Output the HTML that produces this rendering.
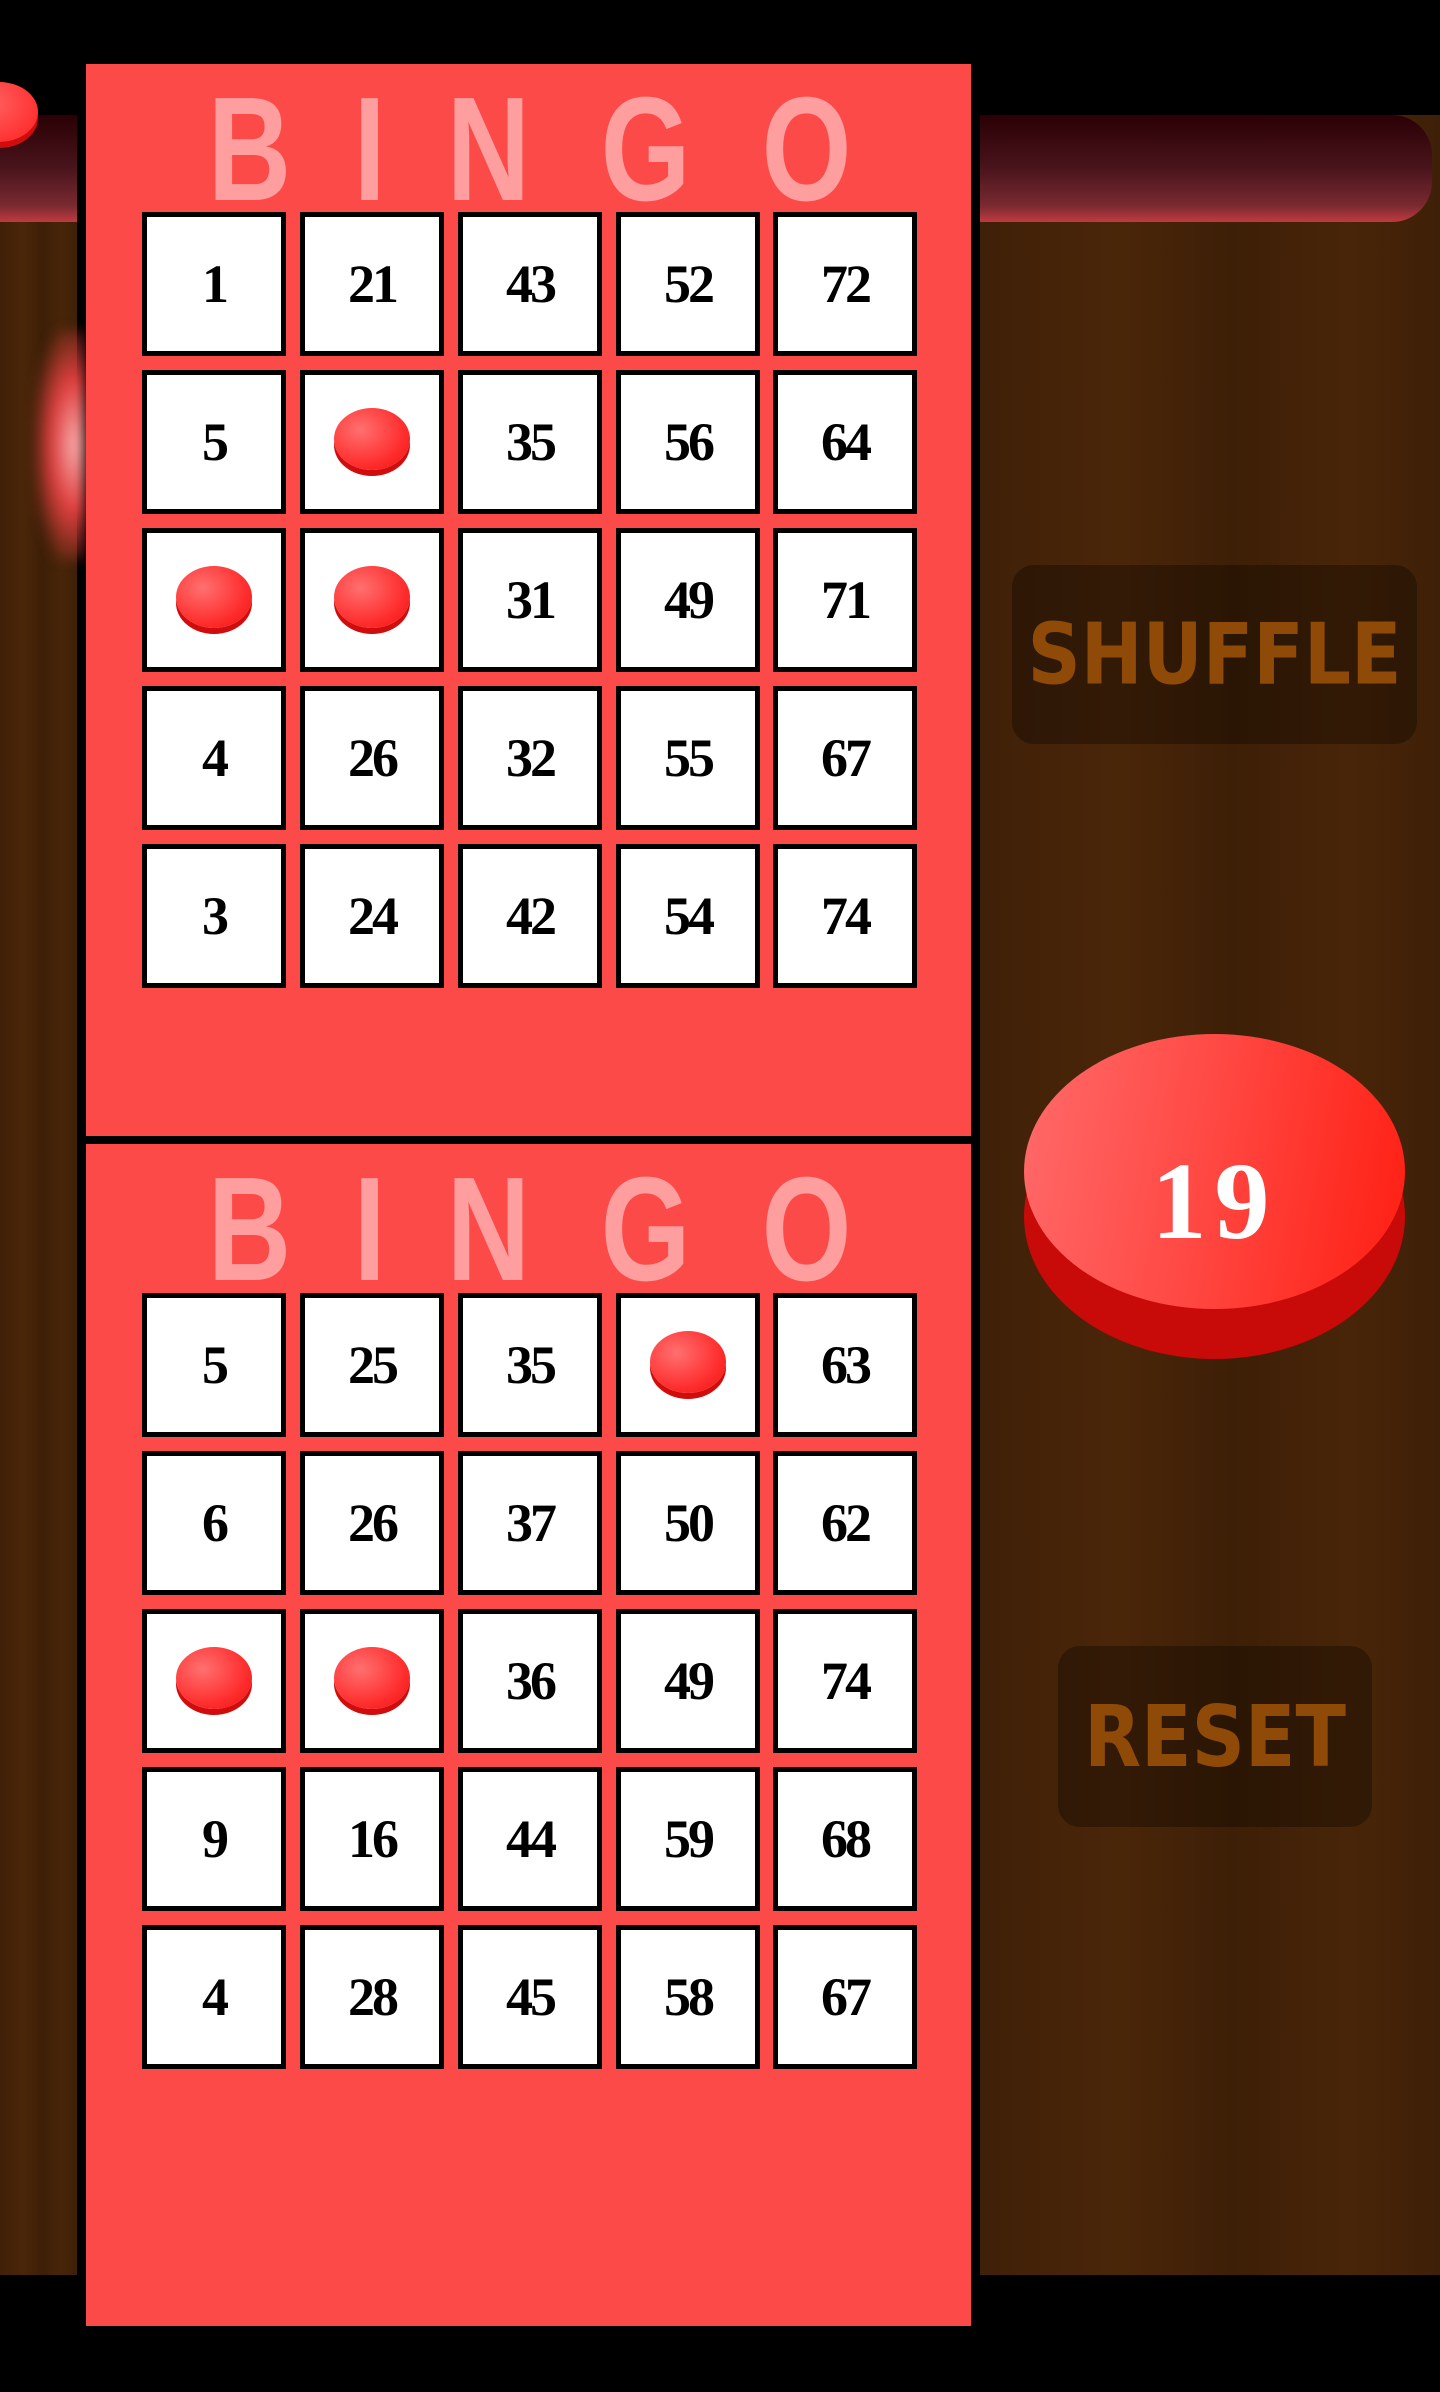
<!DOCTYPE html>
<html><head><meta charset="utf-8"><style>
*{margin:0;padding:0;box-sizing:border-box}
body{width:1440px;height:2392px;background:#000;position:relative;overflow:hidden;font-family:"Liberation Serif",serif}
.wood{position:absolute;top:115px;height:2160px;background:linear-gradient(90deg,#3f2008,#4a2609 30%,#3d1f07 55%,#482508 80%,#3e2008)}
.tube{position:absolute;top:115px;height:107px;background:linear-gradient(180deg,#2a0005,#4a141c 50%,#7a2a30 85%,#c03a40 100%)}
.card{position:absolute;left:86px;width:885px;background:#fb4a48}
.bingo{position:absolute;left:196px;width:668px;display:flex;justify-content:space-between;font-family:"Liberation Sans",sans-serif;font-weight:bold;color:#ff9e9e;font-size:148px;line-height:1;height:110px;overflow:visible}
.bingo span{display:inline-block;transform:scaleX(0.78);transform-origin:center top}
.cell{position:absolute;width:144px;height:144px;background:#fff;border:5px solid #000;font-weight:bold;font-size:54px;display:flex;align-items:center;justify-content:center;letter-spacing:-3px}
.chip{width:76px;height:62px;border-radius:50%;background:radial-gradient(ellipse at 35% 35%,#ff7070,#ff3030 60%,#f01010);box-shadow:0 6px 0 #d00c0c;margin-top:-6px}
.btn{position:absolute;background:rgba(0,0,0,.3);border-radius:22px;color:#8f4a08;font-family:"DejaVu Sans",sans-serif;font-weight:bold;display:flex;align-items:center;justify-content:center;font-size:74px}
.btn span{display:inline-block;transform:scaleY(1.15)}
</style></head><body>
<div class="wood" style="left:0;width:77px"></div>
<div class="wood" style="left:980px;width:460px"></div>
<div class="tube" style="left:0;width:77px"></div>
<div class="tube" style="left:980px;width:452px;border-radius:0 40px 40px 0"></div>
<div style="position:absolute;left:-40px;top:82px;width:78px;height:60px;border-radius:50%;background:radial-gradient(ellipse at 40% 35%,#ff6060,#ff2020);box-shadow:0 6px 0 #d00c0c"></div>
<div style="position:absolute;left:35px;top:330px;width:50px;height:230px;background:radial-gradient(ellipse at 80% 50%,#f8b0b0,#e04040 40%,rgba(200,40,40,0) 80%);filter:blur(6px)"></div>
<div class="card" style="top:64px;height:1072px"></div>
<div style="position:absolute;left:86px;top:1136px;width:885px;height:8px;background:#000"></div>
<div class="card" style="top:1144px;height:1182px"></div>
<div class="bingo" style="top:76px"><span>B</span><span>I</span><span>N</span><span>G</span><span>O</span></div>
<div class="bingo" style="top:1156px"><span>B</span><span>I</span><span>N</span><span>G</span><span>O</span></div>
<div id="g"></div>
<div style="position:absolute;left:1024px;top:1034px;width:381px;height:325px">
 <div style="position:absolute;left:0;top:40px;width:381px;height:285px;border-radius:50%;background:#c80a08"></div>
 <div style="position:absolute;left:0;top:0;width:381px;height:275px;border-radius:50%;background:linear-gradient(100deg,#ff6a6a,#ff4a45 45%,#ff1e12)"></div>
 <div style="position:absolute;left:0;top:112px;width:381px;text-align:center;color:#fff;font-weight:bold;font-size:110px;line-height:1;letter-spacing:8px">19</div>
</div>
<div class="btn" style="left:1012px;top:565px;width:405px;height:179px"><span>SHUFFLE</span></div>
<div class="btn" style="left:1058px;top:1646px;width:314px;height:181px"><span>RESET</span></div>
<script>
var c1=[[1,21,43,52,72],[5,0,35,56,64],[0,0,31,49,71],[4,26,32,55,67],[3,24,42,54,74]];
var c2=[[5,25,35,0,63],[6,26,37,50,62],[0,0,36,49,74],[9,16,44,59,68],[4,28,45,58,67]];
var xs=[142,300,458,616,773],h='';
function draw(c,y0){for(var r=0;r<5;r++)for(var k=0;k<5;k++){var v=c[r][k];h+='<div class="cell" style="left:'+xs[k]+'px;top:'+(y0+r*158)+'px">'+(v?v:'<div class="chip"></div>')+'</div>';}}
draw(c1,212);draw(c2,1293);
document.getElementById('g').innerHTML=h;
</script>
</body></html>
